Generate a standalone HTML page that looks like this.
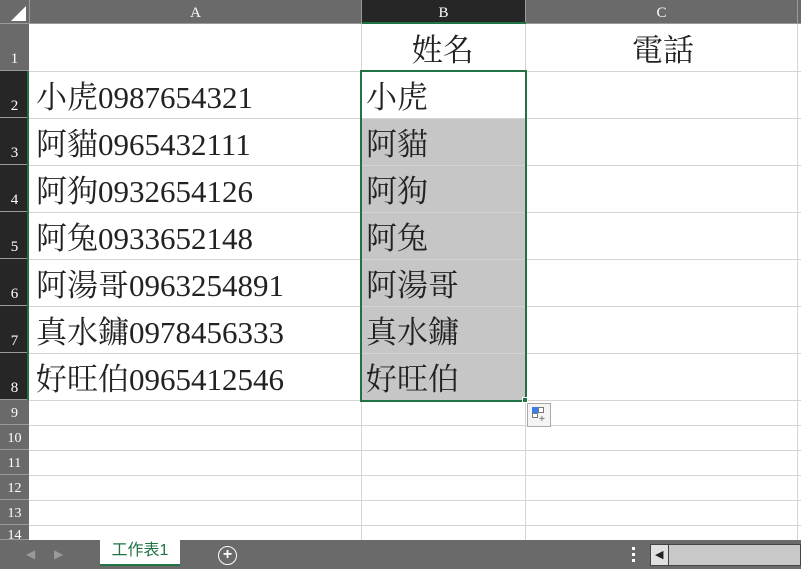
<!DOCTYPE html>
<html><head><meta charset="utf-8"><style>
*{margin:0;padding:0;box-sizing:border-box}
body{width:801px;height:569px;overflow:hidden;background:#fff;position:relative;font-family:"Liberation Serif","Noto Serif CJK TC",serif}
.a{position:absolute}
.hl{position:absolute;height:1px;background:#d4d4d4}
.vl{position:absolute;width:1px;background:#d4d4d4}
.t{position:absolute;font-size:31px;line-height:31px;color:#222;white-space:nowrap}
.rh{position:absolute;left:0;width:29px;color:#fff;font-size:15px;text-align:center;display:flex;align-items:flex-end;justify-content:center;padding-bottom:2px;border-bottom:1px solid #9a9a9a}
.ch{position:absolute;top:0;height:24px;color:#fff;font-size:15px;text-align:center;line-height:26px;border-right:1px solid #9a9a9a}
</style></head><body>
<!-- column headers -->
<div class="a" style="left:0;top:0;width:801px;height:24px;background:#6a6a6a;border-bottom:1px solid #9a9a9a"></div>
<svg class="a" style="left:8px;top:4px" width="20" height="18"><polygon points="18,2 18,17 3,17" fill="#fff"/></svg>
<div class="ch" style="left:29px;width:333px;border-left:1px solid #9a9a9a">A</div>
<div class="ch" style="left:362px;width:164px;background:#262626">B</div>
<div class="a" style="left:362px;top:22px;width:164px;height:2px;background:#217346"></div>
<div class="ch" style="left:526px;width:272px">C</div>
<!-- row headers -->
<div class="rh" style="top:24px;height:47px;background:#6a6a6a">1</div>
<div class="rh" style="top:71px;height:47px;background:#262626">2</div>
<div class="rh" style="top:118px;height:47px;background:#262626">3</div>
<div class="rh" style="top:165px;height:47px;background:#262626">4</div>
<div class="rh" style="top:212px;height:47px;background:#262626">5</div>
<div class="rh" style="top:259px;height:47px;background:#262626">6</div>
<div class="rh" style="top:306px;height:47px;background:#262626">7</div>
<div class="rh" style="top:353px;height:47px;background:#262626">8</div>
<div class="rh" style="top:400px;height:25px;background:#6a6a6a;font-size:14px">9</div>
<div class="rh" style="top:425px;height:25px;background:#6a6a6a;font-size:14px">10</div>
<div class="rh" style="top:450px;height:25px;background:#6a6a6a;font-size:14px">11</div>
<div class="rh" style="top:475px;height:25px;background:#6a6a6a;font-size:14px">12</div>
<div class="rh" style="top:500px;height:25px;background:#6a6a6a;font-size:14px">13</div>
<div class="rh" style="top:525px;height:15px;background:#6a6a6a;font-size:14px;overflow:hidden;align-items:flex-start;padding-top:3px">14</div>
<div class="a" style="left:27px;top:71px;width:2px;height:329px;background:#217346"></div>
<!-- selection fill -->
<div class="a" style="left:362px;top:118px;width:163px;height:282px;background:#c6c6c6"></div>
<!-- grid -->
<div class="hl" style="left:29px;top:71px;width:772px"></div>
<div class="hl" style="left:29px;top:118px;width:772px"></div>
<div class="hl" style="left:29px;top:165px;width:772px"></div>
<div class="hl" style="left:29px;top:212px;width:772px"></div>
<div class="hl" style="left:29px;top:259px;width:772px"></div>
<div class="hl" style="left:29px;top:306px;width:772px"></div>
<div class="hl" style="left:29px;top:353px;width:772px"></div>
<div class="hl" style="left:29px;top:400px;width:772px"></div>
<div class="hl" style="left:29px;top:425px;width:772px"></div>
<div class="hl" style="left:29px;top:450px;width:772px"></div>
<div class="hl" style="left:29px;top:475px;width:772px"></div>
<div class="hl" style="left:29px;top:500px;width:772px"></div>
<div class="hl" style="left:29px;top:525px;width:772px"></div>
<div class="vl" style="left:361px;top:24px;height:516px"></div>
<div class="vl" style="left:525px;top:24px;height:516px"></div>
<div class="vl" style="left:797px;top:24px;height:516px"></div>
<!-- B selection border -->
<div class="a" style="left:360px;top:70px;width:167px;height:332px;border:2px solid #217346"></div>
<div class="a" style="left:522px;top:397px;width:6px;height:6px;background:#217346;border:1px solid #fff"></div>
<!-- quick fill icon -->
<div class="a" style="left:527px;top:403px;width:24px;height:24px;border:1px solid #aaa;background:#f4f4f4"></div>
<div class="a" style="left:532px;top:407px;width:6px;height:6px;background:#3b7ee8"></div>
<div class="a" style="left:538px;top:407px;width:6px;height:6px;border:1px solid #777;background:#fff"></div>
<div class="a" style="left:532px;top:413px;width:6px;height:5px;border:1px solid #777;background:#fff"></div>
<div class="a" style="left:539px;top:414px;font:bold 10px 'Liberation Sans';color:#888">+</div>
<!-- text -->
<div class="t" style="left:412px;top:35px">姓名</div>
<div class="t" style="left:632px;top:35px">電話</div>
<div class="t" style="left:36px;top:82px">小虎0987654321</div>
<div class="t" style="left:36px;top:129px">阿貓0965432111</div>
<div class="t" style="left:36px;top:176px">阿狗0932654126</div>
<div class="t" style="left:36px;top:223px">阿兔0933652148</div>
<div class="t" style="left:36px;top:270px">阿湯哥0963254891</div>
<div class="t" style="left:36px;top:317px">真水鏞0978456333</div>
<div class="t" style="left:36px;top:364px">好旺伯0965412546</div>
<div class="t" style="left:366px;top:82px">小虎</div>
<div class="t" style="left:366px;top:129px">阿貓</div>
<div class="t" style="left:366px;top:176px">阿狗</div>
<div class="t" style="left:366px;top:223px">阿兔</div>
<div class="t" style="left:366px;top:270px">阿湯哥</div>
<div class="t" style="left:366px;top:317px">真水鏞</div>
<div class="t" style="left:366px;top:364px">好旺伯</div>
<!-- tab bar -->
<div class="a" style="left:0;top:540px;width:801px;height:29px;background:#6a6a6a"></div>
<div class="a" style="left:26px;top:547px;color:#9a9a9a;font:12px 'Liberation Sans'">◀</div>
<div class="a" style="left:54px;top:547px;color:#9a9a9a;font:12px 'Liberation Sans'">▶</div>
<div class="a" style="left:100px;top:540px;width:80px;height:26px;background:#fff;border-bottom:2px solid #217346;color:#217346;font:16px 'Liberation Sans','Noto Sans CJK TC',sans-serif;text-align:center;line-height:22px">工作表1</div>
<div class="a" style="left:218px;top:546px;width:19px;height:19px;border:1.5px solid #fff;border-radius:50%;color:#fff;text-align:center;font:bold 16px/16px 'Liberation Sans'">+</div>
<div class="a" style="left:632px;top:547px;width:3px;height:3px;background:#fff"></div>
<div class="a" style="left:632px;top:553px;width:3px;height:3px;background:#fff"></div>
<div class="a" style="left:632px;top:559px;width:3px;height:3px;background:#fff"></div>
<div class="a" style="left:650px;top:544px;width:151px;height:22px;background:#c8c8c8;border:1px solid #444"></div>
<div class="a" style="left:651px;top:545px;width:18px;height:20px;background:#e0e0e0;border-right:1px solid #444"></div>
<div class="a" style="left:655px;top:548px;font:11px 'Liberation Sans';color:#222">◀</div>
</body></html>
